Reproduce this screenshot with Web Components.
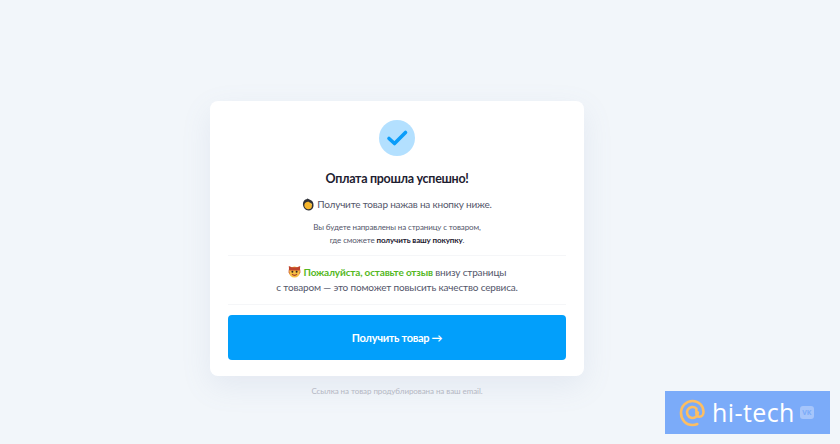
<!DOCTYPE html>
<html lang="ru">
<head>
<meta charset="utf-8">
<title>Оплата прошла успешно</title>
<style>
html, body { margin: 0; height: 100%; }
body { background: #f2f6fa; font-family: Lato, "Liberation Sans", sans-serif; overflow: hidden; }
</style>
</head>
<body>
<success-page>
	<success-card>
		<check-badge></check-badge>
		<h1 slot="title">Оплата прошла успешно!</h1>
		<span slot="lead"><hand-emoji></hand-emoji>Получите товар нажав на кнопку ниже.</span>
		<span slot="note">Вы будете направлены на страницу с товаром,<br>где сможете <b>получить вашу покупку</b>.</span>
		<span slot="review"><face-emoji></face-emoji><b>Пожалуйста, оставьте отзыв</b> внизу страницы<br>с товаром — это поможет повысить качество сервиса.</span>
		<big-button slot="action">Получить товар →</big-button>
	</success-card>
	<span slot="foot">Ссылка на товар продублирована на ваш email.</span>
</success-page>
<hitech-mark></hitech-mark>

<script>
class SuccessPage extends HTMLElement {
	constructor() {
		super();
		this.attachShadow({mode: 'open'}).innerHTML = `<style>
			:host { display: flex; flex-direction: column; align-items: center; padding: 101px 46px 0 0; height: 343px; }
			.foot { margin-top: 9px; font-size: 8px; letter-spacing: -.07px; line-height: 12px; color: #b4b7c3; }
		</style>
		<slot></slot>
		<div class="foot"><slot name="foot"></slot></div>`;
	}
}

class SuccessCard extends HTMLElement {
	constructor() {
		super();
		this.attachShadow({mode: 'open'}).innerHTML = `<style>
			:host { display: flex; flex-direction: column; align-items: stretch; box-sizing: border-box; width: 374px; height: 275px; padding: 19px 18px 16px; background: #fff; border-radius: 8px; box-shadow: 0 10px 30px rgba(120, 140, 180, .12); text-align: center; color: #53566a; }
			::slotted(h1) { margin: 0; font-size: 12.5px; letter-spacing: -.3px; line-height: 16px; font-weight: 700; color: #1d2030; }
			.title { margin-top: 15px; }
			.lead { margin-top: 9px; font-size: 10px; letter-spacing: -.2px; line-height: 16px; }
			.note { margin-top: 9px; padding-bottom: 9px; font-size: 8px; letter-spacing: -.12px; line-height: 12.5px; border-bottom: 1px solid #f5f6f8; }
			.review { margin-top: 9px; padding-bottom: 9px; font-size: 10px; letter-spacing: -.16px; line-height: 15px; border-bottom: 1px solid #f5f6f8; }
			.action { margin-top: 10px; }
		</style>
		<slot></slot>
		<div class="title"><slot name="title"></slot></div>
		<div class="lead"><slot name="lead"></slot></div>
		<div class="note"><slot name="note"></slot></div>
		<div class="review"><slot name="review"></slot></div>
		<div class="action"><slot name="action"></slot></div>`;
	}
	connectedCallback() {
		// b inside the slots is light DOM, so colour it from here
		this.querySelector('[slot=note] b').style.cssText = 'color:#1d2030;font-weight:700';
		this.querySelector('[slot=review] b').style.cssText = 'color:#55b81e;font-weight:700';
	}
}

class CheckBadge extends HTMLElement {
	constructor() {
		super();
		this.attachShadow({mode: 'open'}).innerHTML = `<style>
			:host { display: block; width: 36px; height: 36px; margin: 0 auto; }
			svg { display: block; }
		</style>
		<svg width="36" height="36" viewBox="0 0 36 36">
			<circle cx="18" cy="18" r="18" fill="#b3e0ff"/>
			<path d="M10 18.500l5.500 5L26.500 12.500" fill="none" stroke="#0a9dfa" stroke-width="3.600" stroke-linecap="round" stroke-linejoin="round"/>
		</svg>`;
	}
}

class HandEmoji extends HTMLElement {
	constructor() {
		super();
		this.attachShadow({mode: 'open'}).innerHTML = `<style>
			:host { display: inline-block; width: 12px; height: 13px; vertical-align: -3px; margin-right: 3px; }
			svg { display: block; }
		</style>
		<svg width="12" height="13" viewBox="0 0 12 13">
			<path d="M1 7C.6 4 2.400 1.400 4 1.500L5.500.6l3 1.400C10.500 2.500 11.800 5 11.500 8c-.3 3-2.500 4.600-5 4.500C3.500 12.400 1.400 10 1 7z" fill="#2f3138"/>
			<path d="M2.400 6.500C3 4.500 5.500 3.200 7.400 4.200S10.400 7 9.800 9 6.900 11.700 5 10.900 2 8.500 2.400 6.500z" fill="#f6b62d"/>
			<path d="M8 4.500l2 1.500-.5 1.500z" fill="#ffd560"/>
		</svg>`;
	}
}

class FaceEmoji extends HTMLElement {
	constructor() {
		super();
		this.attachShadow({mode: 'open'}).innerHTML = `<style>
			:host { display: inline-block; width: 13px; height: 13px; vertical-align: -2px; margin-right: 3px; }
			svg { display: block; }
		</style>
		<svg width="13" height="13" viewBox="0 0 13 13">
			<circle cx="6.500" cy="7" r="5.600" fill="#f6c044"/>
			<path d="M.8 1l3 1.200h5.400l3-1.200-.3 4.600H1.100z" fill="#c0432c"/>
			<path d="M.8 4l1 5.500L.6 7.500zM12.200 4l-1 5.500 1.200-2z" fill="#c0432c"/>
			<circle cx="4.400" cy="6.700" r="1" fill="#3a2a20"/>
			<circle cx="8.600" cy="6.700" r="1" fill="#3a2a20"/>
			<path d="M4 9.200c1.500 1.400 3.500 1.400 5 0" fill="none" stroke="#a8402c" stroke-width="1.100"/>
		</svg>`;
	}
}

class BigButton extends HTMLElement {
	constructor() {
		super();
		this.attachShadow({mode: 'open'}).innerHTML = `<style>
			:host { display: flex; align-items: center; justify-content: center; height: 45px; background: #029ffb; border-radius: 4px; color: #fff; font-size: 11px; letter-spacing: -.3px; font-weight: 700; }
		</style>
		<slot></slot>`;
	}
}

class HitechMark extends HTMLElement {
	constructor() {
		super();
		this.attachShadow({mode: 'open'}).innerHTML = `<style>
			:host { position: absolute; left: 665px; top: 391px; width: 165px; height: 43px; display: flex; align-items: center; box-sizing: border-box; padding-left: 14px; background: #7babf9; color: #fff; font-size: 25px; font-family: "Open Sans", sans-serif; }
			svg { display: block; flex: none; }
			.name { margin-left: 6px; line-height: 43px; letter-spacing: .4px; }
			.vk { margin-left: 5px; width: 14px; height: 13px; border-radius: 3px; background: #a6c5fb; color: #7babf9; font-size: 7px; line-height: 13px; font-weight: 700; text-align: center; letter-spacing: 0; }
		</style>
		<svg width="27" height="28" viewBox="0 0 27 28">
			<path d="M19 13.500a5.500 5.500 0 1 1-1.600-3.900V14.500c0 2 1.200 3.300 3 3.300 2.400 0 4.100-2 4.100-4.800C24.500 6.800 19.800 2 13.500 2S2 7.200 2 14s5 12 11.500 12c1.800 0 3.400-.3 4.800-1" fill="none" stroke="#fdbe62" stroke-width="2.600" stroke-linecap="round"/>
		</svg>
		<span class="name">hi-tech</span>
		<span class="vk">VK</span>`;
	}
}

customElements.define('success-page', SuccessPage);
customElements.define('success-card', SuccessCard);
customElements.define('check-badge', CheckBadge);
customElements.define('hand-emoji', HandEmoji);
customElements.define('face-emoji', FaceEmoji);
customElements.define('big-button', BigButton);
customElements.define('hitech-mark', HitechMark);
</script>
</body>
</html>
